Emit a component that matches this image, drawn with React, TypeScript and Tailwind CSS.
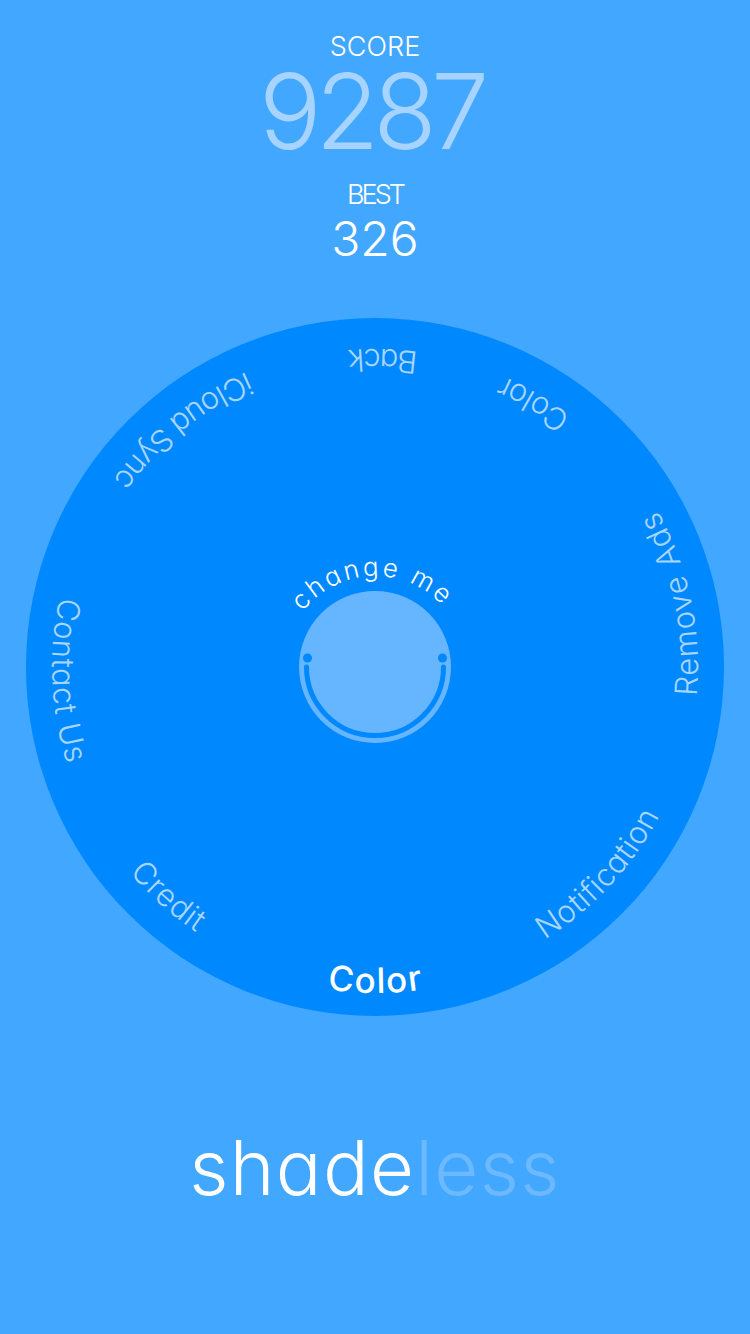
const F = "font-['Inter',sans-serif] [font-feature-settings:'cv11']";
const CX = 349, CY = 349;
const rad = (d: number) => (d * Math.PI) / 180;
function arc(r: number, a0: number, a1: number, cw = false) {
  const p0 = [CX + r * Math.cos(rad(a0)), CY + r * Math.sin(rad(a0))];
  const p1 = [CX + r * Math.cos(rad(a1)), CY + r * Math.sin(rad(a1))];
  return `M${p0[0]} ${p0[1]} A${r} ${r} 0 0 ${cw ? 1 : 0} ${p1[0]} ${p1[1]}`;
}
const L = "#aad5ff";
const labels = [
  { t: "Color", a0: 98.4, a1: 81.6, r: 326, s: 35, c: "#ffffff", w: 500 },
  { t: "Notification", a0: 58.1, a1: 27.6, r: 321, s: 31, c: L, w: 300 },
  { t: "Remove Ads", a0: 5.2, a1: -29, r: 323, s: 31, c: L, w: 300 },
  { t: "Color", a0: -52, a1: -66.2, r: 318, s: 31, c: L, w: 300 },
  { t: "Back", a0: -82.2, a1: -95, r: 318, s: 31, c: L, w: 300 },
  { t: "iCloud Sync", a0: -113.5, a1: -144.5, r: 322, s: 31, c: L, w: 300 },
  { t: "Contact Us", a0: 192.5, a1: 162.5, r: 323, s: 31, c: L, w: 300 },
  { t: "Credit", a0: 140.1, a1: 124, r: 320, s: 31, c: L, w: 300 },
];
export default function App() {
  return (
    <div className={`${F} w-[750px] h-[1334px] bg-[#42a7ff] flex flex-col items-center overflow-hidden`}>
      <div className="mt-[29px] h-[36px] leading-[36px] text-[27px] font-light text-white">SCORE</div>
      <div className="h-[98px] leading-[92px] text-[104px] font-light text-[#a6d3ff] tracking-[-6px] pr-[8px]">9287</div>
      <div className="mt-[14px] h-[36px] leading-[36px] text-[27px] font-light text-white tracking-[-3px]">BEST</div>
      <div className="h-[52px] leading-[52px] text-[48px] font-light text-white">326</div>
      <div className="relative mt-[53px] w-[698px] h-[698px] rounded-full bg-[#0088ff] flex items-center justify-center">
        <div className="relative w-[152px] h-[152px] rounded-full bg-[#66b5ff]">
          <svg className="absolute inset-0" width="152" height="152" viewBox="0 0 152 152">
            <circle cx="8.5" cy="67" r="4.5" fill="#0088ff" />
            <circle cx="143.5" cy="67" r="4.5" fill="#0088ff" />
            <path d="M7.5 76 A68.5 68.5 0 0 0 144.5 76" fill="none" stroke="#0088ff" strokeWidth="5" strokeLinecap="round" />
          </svg>
        </div>
        <svg className="absolute inset-0" width="698" height="698" viewBox="0 0 698 698">
          <defs>
            {labels.map((l, i) => (
              <path key={i} id={`lp${i}`} d={arc(l.r, l.a0, l.a1)} />
            ))}
            <path id="cm" d={arc(91, -142.5, -43, true)} />
          </defs>
          {labels.map((l, i) => (
            <text key={i} fontSize={l.s} fill={l.c} fontWeight={l.w} textLength={(l.r * Math.abs(l.a0 - l.a1) * Math.PI) / 180}>
              <textPath href={`#lp${i}`}>{l.t}</textPath>
            </text>
          ))}
          <text fontSize="26" fill="#ffffff" fontWeight="300" textLength={(91 * 99.5 * Math.PI) / 180}>
            <textPath href="#cm">change me</textPath>
          </text>
        </svg>
      </div>
      <div className="mt-[101px] h-[100px] leading-[100px] text-[76px] font-light tracking-[1.3px]">
        <span className="text-white">shade</span>
        <span className="text-[#6cb9ff]">less</span>
      </div>
    </div>
  );
}
